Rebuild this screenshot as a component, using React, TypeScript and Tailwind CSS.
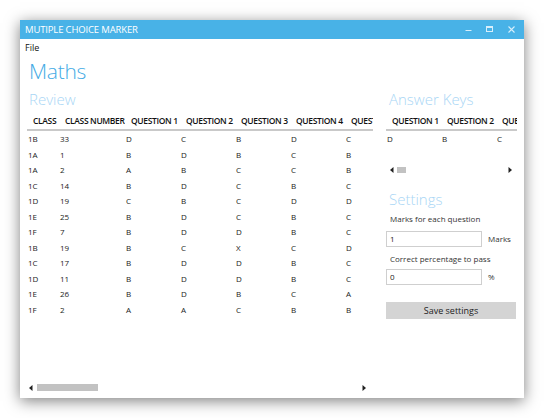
import React from 'react';

// review data: class, class number, Q1..Q5
const rows: string[][] = [
  ['1B', '33', 'D', 'C', 'B', 'D', 'C'],
  ['1A', '1', 'B', 'D', 'B', 'C', 'B'],
  ['1A', '2', 'A', 'B', 'C', 'C', 'B'],
  ['1C', '14', 'B', 'D', 'C', 'B', 'C'],
  ['1D', '19', 'C', 'B', 'C', 'D', 'D'],
  ['1E', '25', 'B', 'D', 'C', 'B', 'C'],
  ['1F', '7', 'B', 'D', 'D', 'B', 'C'],
  ['1B', '19', 'B', 'C', 'X', 'C', 'D'],
  ['1C', '17', 'B', 'D', 'D', 'B', 'C'],
  ['1D', '11', 'B', 'D', 'D', 'B', 'C'],
  ['1E', '26', 'B', 'D', 'B', 'C', 'A'],
  ['1F', '2', 'A', 'A', 'C', 'B', 'B'],
];

const headers = ['CLASS', 'CLASS NUMBER', 'QUESTION 1', 'QUESTION 2', 'QUESTION 3', 'QUESTION 4', 'QUESTION 5'];
// last column is cut by the grid's right edge
const widths = ['w-[32px]', 'w-[66px]', 'w-[55px]', 'w-[55px]', 'w-[55px]', 'w-[55px]', 'w-[28px]'];

const headCell = 'shrink-0 overflow-hidden pl-[6px] whitespace-nowrap text-[8.5px] font-semibold tracking-[-0.35px] text-[#111] leading-[16px]';
const dataCell = 'shrink-0 overflow-hidden pl-[1px] whitespace-nowrap text-[8px] text-[#222] leading-[15.5px]';
const subHeading = 'h-[20px] leading-[20px] text-[15px] font-light text-[#a9d6f5]';
const label = 'h-[14px] leading-[14px] text-[8px] text-[#333] pl-[4px]';

function ArrowLeft() {
  return (
    <svg width="4" height="6" viewBox="0 0 4 6">
      <path d="M3.5 0 L0 3 L3.5 6 Z" fill="#222" />
    </svg>
  );
}

function ArrowRight() {
  return (
    <svg width="4" height="6" viewBox="0 0 4 6">
      <path d="M0.5 0 L4 3 L0.5 6 Z" fill="#222" />
    </svg>
  );
}

function TitleBar() {
  return (
    <div className="h-[19px] shrink-0 bg-[#48b2e7] flex items-center pl-[5px] text-white">
      <span className="text-[9.5px] leading-[19px] tracking-[-0.15px]">MUTIPLE CHOICE MARKER</span>
      <div className="ml-auto flex items-center h-full">
        {/* minimise */}
        <div className="w-[21px] h-full flex items-center justify-center">
          <svg width="7" height="7" viewBox="0 0 7 7">
            <rect x="0.5" y="4" width="6" height="1" fill="#d6eefb" />
          </svg>
        </div>
        {/* maximise */}
        <div className="w-[21px] h-full flex items-center justify-center">
          <svg width="7" height="7" viewBox="0 0 7 7">
            <rect x="0.5" y="0.5" width="6" height="5" fill="none" stroke="#d6eefb" strokeWidth="1" />
            <rect x="0.5" y="0.5" width="6" height="1.5" fill="#d6eefb" />
          </svg>
        </div>
        {/* close */}
        <div className="w-[22px] h-full flex items-center justify-center mr-[2px]">
          <svg width="7" height="7" viewBox="0 0 7 7">
            <path d="M0.5 0.5 L6.5 6.5 M6.5 0.5 L0.5 6.5" stroke="#d6eefb" strokeWidth="1.1" />
          </svg>
        </div>
      </div>
    </div>
  );
}

export default function App() {
  return (
    <div className="w-[544px] h-[418px] bg-white pt-[20px] pl-[20px] font-['Open_Sans','Noto_Sans',sans-serif]">
      <div className="w-[504px] h-[378px] bg-white flex flex-col shadow-[0_3px_14px_rgba(0,0,0,0.5)]">
        <TitleBar />

        {/* MENU */}
        <div className="h-[18px] shrink-0 flex items-center pl-[5px] text-[9px] text-[#111]">File</div>

        <div className="flex-1 flex flex-col px-[7px] pb-[6px]">
          <div className="h-[28px] leading-[28px] text-[21px] tracking-[-0.3px] font-light text-[#44abe5] pl-[2px]">Maths</div>

          <div className="flex flex-1 mt-[4px]">
            {/* REVIEW */}
            <div className="w-[346px] flex flex-col">
              <div className={`${subHeading} pl-[2px]`}>Review</div>
              <div className="mt-[4px] overflow-hidden">
                <div className="flex border-b-[2px] border-[#c9c9c9]">
                  {headers.map((h, i) => (
                    <div key={h} className={`${headCell} ${widths[i]}`}>{h}</div>
                  ))}
                </div>
                {rows.map((r, ri) => (
                  <div key={ri} className="flex">
                    {r.map((v, ci) => (
                      <div key={ci} className={`${dataCell} ${widths[ci]}`}>{v}</div>
                    ))}
                  </div>
                ))}
              </div>
              <div className="flex-1" />
              <div className="h-[9px] flex items-center px-[2px]">
                <ArrowLeft />
                <div className="ml-[4px] w-[61px] h-[7px] bg-[#c2c2c2]" />
                <div className="ml-auto mr-[5px]">
                  <ArrowRight />
                </div>
              </div>
            </div>

            {/* ANSWER KEYS + SETTINGS */}
            <div className="ml-[13px] w-[131px] flex flex-col">
              <div className={`${subHeading} pl-[3px]`}>Answer Keys</div>
              <div className="mt-[4px] overflow-hidden">
                <div className="flex border-b-[2px] border-[#c9c9c9]">
                  <div className={`${headCell} w-[55px]`}>QUESTION 1</div>
                  <div className={`${headCell} w-[55px]`}>QUESTION 2</div>
                  <div className={`${headCell} w-[21px]`}>QUESTION 3</div>
                </div>
                <div className="flex">
                  <div className={`${dataCell} w-[55px]`}>D</div>
                  <div className={`${dataCell} w-[55px]`}>B</div>
                  <div className={`${dataCell} w-[21px]`}>C</div>
                </div>
              </div>
              <div className="mt-[20px] h-[7px] flex items-center pl-[4px]">
                <ArrowLeft />
                <div className="ml-[3px] w-[9px] h-[6px] bg-[#c2c2c2]" />
                <div className="ml-auto mr-[5px]">
                  <ArrowRight />
                </div>
              </div>

              <div className={`${subHeading} mt-[15px] pl-[3px]`}>Settings</div>
              <div className={`${label} mt-[3.5px]`}>Marks for each question</div>
              <div className="mt-[4.5px] flex items-center">
                <div className="w-[96px] h-[16px] border border-[#cfcfcf] text-[8px] leading-[14px] pl-[3px] text-[#222]">1</div>
                <span className="ml-[6px] text-[8px] text-[#333]">Marks</span>
              </div>
              <div className={`${label} mt-[5px]`}>Correct percentage to pass</div>
              <div className="mt-[3.5px] flex items-center">
                <div className="w-[96px] h-[16px] border border-[#cfcfcf] text-[8px] leading-[14px] pl-[3px] text-[#222]">0</div>
                <span className="ml-[6px] text-[8px] text-[#333]">%</span>
              </div>
              <button className="mt-[17px] w-[130px] h-[17px] bg-[#d4d4d4] text-[9px] leading-[17px] text-[#222] text-center">
                Save settings
              </button>
            </div>
          </div>
        </div>
      </div>
    </div>
  );
}
